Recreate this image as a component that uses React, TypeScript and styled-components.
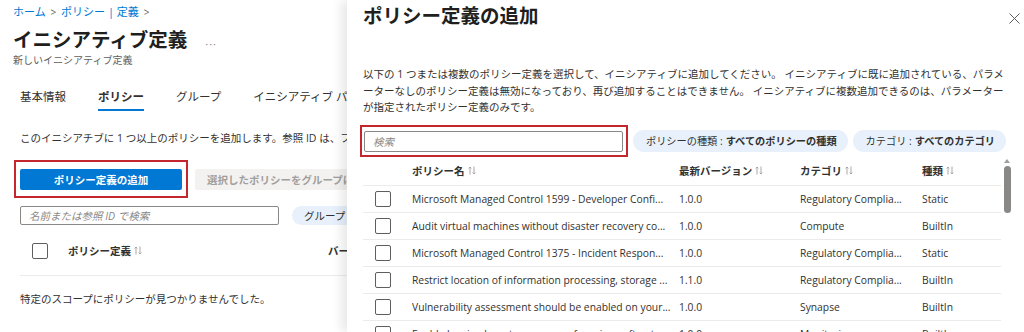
import React from 'react';
import styled, { createGlobalStyle } from 'styled-components';

const GlobalStyle = createGlobalStyle`
  html, body {
    margin: 0;
    padding: 0;
    background: #fff;
    overflow: hidden;
  }
  body {
    font-family: 'Segoe UI', 'Open Sans', 'Noto Sans CJK JP', sans-serif;
    color: #323130;
  }
`;

interface IRow {
  name: string;
  version: string;
  category: string;
  kind: string;
}

const rows: IRow[] = [
  { name: 'Microsoft Managed Control 1599 - Developer Confi...', version: '1.0.0', category: 'Regulatory Complia...', kind: 'Static' },
  { name: 'Audit virtual machines without disaster recovery co...', version: '1.0.0', category: 'Compute', kind: 'BuiltIn' },
  { name: 'Microsoft Managed Control 1375 - Incident Respon...', version: '1.0.0', category: 'Regulatory Complia...', kind: 'Static' },
  { name: 'Restrict location of information processing, storage ...', version: '1.1.0', category: 'Regulatory Complia...', kind: 'BuiltIn' },
  { name: 'Vulnerability assessment should be enabled on your...', version: '1.0.0', category: 'Synapse', kind: 'BuiltIn' },
  { name: 'Enable logging by category group for microsoft.net...', version: '1.0.0', category: 'Monitoring', kind: 'BuiltIn' },
];

const SortIcon = () => (
  <SortSvg width="8" height="9" viewBox="0 0 8 9">
    <path d="M2 8.5V1M0.6 2.4L2 1l1.4 1.4M6 0.5V8M4.6 6.6L6 8l1.4-1.4" fill="none" stroke="#a19f9d" strokeWidth="0.9" />
  </SortSvg>
);

const App: React.FunctionComponent = () => {
  return (
    <Screen>
      <GlobalStyle />
      <LeftPane>
        <Breadcrumb>
          ホーム <Chevron>&gt;</Chevron> ポリシー | 定義 <Chevron>&gt;</Chevron>
        </Breadcrumb>
        <TitleRow>
          <PageTitle>イニシアティブ定義</PageTitle>
          <More>···</More>
        </TitleRow>
        <Subtitle>新しいイニシアティブ定義</Subtitle>
        <Body>
          <Tabs>
            <Tab>基本情報</Tab>
            <Tab $active>ポリシー</Tab>
            <Tab>グループ</Tab>
            <Tab>イニシアティブ パラメーター</Tab>
          </Tabs>
          <Intro>このイニシアチブに 1 つ以上のポリシーを追加します。参照 ID は、フィールドごとに一意である必要があります。</Intro>
          <ActionRow>
            <Highlight>
              <PrimaryButton>ポリシー定義の追加</PrimaryButton>
            </Highlight>
            <DisabledButton>選択したポリシーをグループに追加</DisabledButton>
          </ActionRow>
          <SearchRow>
            <SearchBox $width={259}>名前または参照 ID で検索</SearchBox>
            <Pill>グループ : すべて</Pill>
          </SearchRow>
          <LeftHeader>
            <Checkbox />
            <HeaderLabel>
              ポリシー定義 <SortIcon />
            </HeaderLabel>
            <HeaderLabel>バージョン</HeaderLabel>
          </LeftHeader>
          <EmptyText>特定のスコープにポリシーが見つかりませんでした。</EmptyText>
        </Body>
      </LeftPane>

      <Panel>
        <PanelHeader>
          <PanelTitle>ポリシー定義の追加</PanelTitle>
          <CloseButton>
            <svg width="11" height="11" viewBox="0 0 11 11">
              <path d="M0.5 0.5l10 10M10.5 0.5l-10 10" stroke="#605e5c" strokeWidth="1" />
            </svg>
          </CloseButton>
        </PanelHeader>
        <Description>
          <span>以下の 1 つまたは複数のポリシー定義を選択して、イニシアティブに追加してください。 イニシアティブに既に追加されている、パラメ</span>
          <span>ーターなしのポリシー定義は無効になっており、再び追加することはできません。 イニシアティブに複数追加できるのは、パラメーター</span>
          <span>が指定されたポリシー定義のみです。</span>
        </Description>
        <FilterRow>
          <SearchHighlight>
            <SearchBox $width={259} $tall>検索</SearchBox>
          </SearchHighlight>
          <FilterPill>
            ポリシーの種類 : <b>すべてのポリシーの種類</b>
          </FilterPill>
          <FilterPill>
            カテゴリ : <b>すべてのカテゴリ</b>
          </FilterPill>
        </FilterRow>
        <TableArea>
          <Table>
            <GridRow $header>
              <span />
              <HeaderLabel>
                ポリシー名 <SortIcon />
              </HeaderLabel>
              <HeaderLabel>
                最新バージョン <SortIcon />
              </HeaderLabel>
              <HeaderLabel>
                カテゴリ <SortIcon />
              </HeaderLabel>
              <HeaderLabel>
                種類 <SortIcon />
              </HeaderLabel>
            </GridRow>
            {rows.map((row) => (
              <GridRow key={row.name}>
                <Checkbox />
                <Cell>{row.name}</Cell>
                <Cell>{row.version}</Cell>
                <Cell>{row.category}</Cell>
                <Cell>{row.kind}</Cell>
              </GridRow>
            ))}
          </Table>
          <Scrollbar>
            <ScrollArrow />
            <ScrollThumb />
          </Scrollbar>
        </TableArea>
      </Panel>
    </Screen>
  );
};

const Screen = styled.div`
  display: flex;
  width: 1024px;
  height: 332px;
  overflow: hidden;
  background: #fff;
`;

const LeftPane = styled.div`
  width: 347px;
  flex-shrink: 0;
  overflow: hidden;
  white-space: nowrap;
  padding: 4px 0 0 13px;
  box-sizing: border-box;
`;

const Breadcrumb = styled.div`
  font-size: 11px;
  line-height: 16px;
  color: #0078d4;
`;

const Chevron = styled.span`
  color: #605e5c;
  font-size: 10px;
  margin: 0 2px;
`;

const TitleRow = styled.div`
  display: flex;
  align-items: center;
  margin-top: 7px;
  height: 26px;
`;

const PageTitle = styled.h1`
  margin: 0;
  font-size: 19.5px;
  line-height: 26px;
  font-weight: 700;
  color: #201f1e;
`;

const More = styled.span`
  margin-left: 18px;
  margin-top: 6px;
  font-size: 11px;
  color: #8a8886;
  letter-spacing: 1px;
`;

const Subtitle = styled.div`
  font-size: 10px;
  line-height: 14px;
  color: #605e5c;
`;

const Body = styled.div`
  padding-left: 7px;
`;

const Tabs = styled.div`
  display: flex;
  gap: 32px;
  margin-top: 22px;
`;

const Tab = styled.div<{ $active?: boolean }>`
  font-size: 11.5px;
  line-height: 16px;
  padding-bottom: 4px;
  font-weight: ${({ $active }) => ($active ? 700 : 400)};
  color: #323130;
  border-bottom: 2px solid ${({ $active }) => ($active ? '#0078d4' : 'transparent')};
`;

const Intro = styled.p`
  margin: 19px 0 0;
  font-size: 10.5px;
  line-height: 16px;
  color: #323130;
`;

const ActionRow = styled.div`
  display: flex;
  align-items: center;
  margin-top: 14px;
  margin-left: -6px;
`;

const Highlight = styled.div`
  border: 2px solid #c4262e;
  padding: 5px 4px 6px;
  flex-shrink: 0;
`;

const PrimaryButton = styled.button`
  width: 162px;
  height: 21px;
  border: none;
  border-radius: 2px;
  background: #0078d4;
  color: #fff;
  font-family: inherit;
  font-size: 10.5px;
  font-weight: 700;
  padding: 0;
`;

const DisabledButton = styled.button`
  margin-left: 7px;
  height: 21px;
  flex-shrink: 0;
  border: none;
  border-radius: 2px;
  background: #f3f2f1;
  color: #a19f9d;
  font-family: inherit;
  font-size: 10.5px;
  font-weight: 700;
  padding: 0 12px;
  white-space: nowrap;
`;

const SearchRow = styled.div`
  display: flex;
  align-items: center;
  gap: 13px;
  margin-top: 8px;
`;

const SearchBox = styled.div<{ $width: number; $tall?: boolean }>`
  width: ${({ $width }) => $width}px;
  flex-shrink: 0;
  height: ${({ $tall }) => ($tall ? 21 : 19)}px;
  box-sizing: border-box;
  border: 1px solid #8a8886;
  border-radius: 2px;
  padding: 0 8px;
  display: flex;
  align-items: center;
  font-size: 10.5px;
  font-style: italic;
  color: #8a8886;
  background: #fff;
`;

const Pill = styled.div`
  height: 19px;
  flex-shrink: 0;
  border-radius: 10px;
  background: #e8f1fb;
  padding: 0 14px 0 12px;
  display: flex;
  align-items: center;
  font-size: 10.5px;
  color: #323130;
`;

const LeftHeader = styled.div`
  display: flex;
  align-items: center;
  height: 50px;
  margin-top: 1px;
  padding-left: 12px;
  border-bottom: 1px solid #edebe9;
  box-sizing: border-box;
`;

const Checkbox = styled.span`
  display: block;
  flex-shrink: 0;
  width: 16px;
  height: 16px;
  box-sizing: border-box;
  border: 1px solid #605e5c;
  border-radius: 2px;
  background: #fff;
`;

const HeaderLabel = styled.span`
  font-size: 10.5px;
  font-weight: 700;
  color: #323130;
  display: flex;
  align-items: center;
  gap: 3px;
  flex-shrink: 0;

  ${LeftHeader} & + & {
    margin-left: 186px;
  }
  ${LeftHeader} ${Checkbox} + & {
    margin-left: 20px;
  }
`;

const SortSvg = styled.svg`
  display: block;
`;

const EmptyText = styled.div`
  font-size: 10.5px;
  line-height: 16px;
  margin-top: 15px;
  color: #323130;
`;

const Panel = styled.div`
  flex: 1;
  min-width: 0;
  background: #fff;
  box-shadow: -6px 0 10px rgba(0, 0, 0, 0.09);
  padding: 3px 12px 0 16px;
  box-sizing: border-box;
  position: relative;
  z-index: 1;
`;

const PanelHeader = styled.div`
  display: flex;
  align-items: center;
  justify-content: space-between;
  height: 26px;
`;

const PanelTitle = styled.h2`
  margin: 0;
  font-size: 19.5px;
  line-height: 26px;
  font-weight: 700;
  color: #201f1e;
`;

const CloseButton = styled.div`
  display: flex;
  margin-top: 4px;
  margin-right: -8px;
`;

const Description = styled.div`
  margin-top: 37px;
  display: flex;
  flex-direction: column;
  font-size: 10.5px;
  line-height: 16.5px;
  white-space: nowrap;
  color: #323130;
`;

const FilterRow = styled.div`
  display: flex;
  align-items: center;
  gap: 5px;
  margin-top: 9px;
  margin-left: -3px;
`;

const SearchHighlight = styled.div`
  border: 2px solid #c4262e;
  padding: 4px 3px 3px 2px;
`;

const FilterPill = styled.div`
  height: 22px;
  border-radius: 11px;
  background: #e8f1fb;
  padding: 0 11px 0 13px;
  display: flex;
  align-items: center;
  white-space: nowrap;
  font-size: 10.2px;
  color: #323130;

  b {
    font-weight: 700;
    margin-left: 3px;
  }
`;

const TableArea = styled.div`
  display: flex;
  gap: 1px;
`;

const Table = styled.div`
  flex: 1;
  min-width: 0;
`;

const GridRow = styled.div<{ $header?: boolean }>`
  display: grid;
  grid-template-columns: 49px 267px 121px 122px 1fr;
  align-items: center;
  height: ${({ $header }) => ($header ? 29 : 27)}px;
  border-bottom: 1px solid #edebe9;
  box-sizing: border-box;

  & > ${Checkbox} {
    margin-left: 12px;
  }
`;

const Cell = styled.span`
  font-size: 10.3px;
  color: #323130;
  white-space: nowrap;
  overflow: hidden;
`;

const Scrollbar = styled.div`
  width: 10px;
  display: flex;
  flex-direction: column;
  align-items: center;
  padding-top: 2px;
`;

const ScrollArrow = styled.span`
  width: 0;
  height: 0;
  border-left: 3px solid transparent;
  border-right: 3px solid transparent;
  border-bottom: 4px solid #a19f9d;
`;

const ScrollThumb = styled.span`
  margin-top: 3px;
  width: 7px;
  height: 47px;
  border-radius: 4px;
  background: #8a8886;
`;

export default App;
